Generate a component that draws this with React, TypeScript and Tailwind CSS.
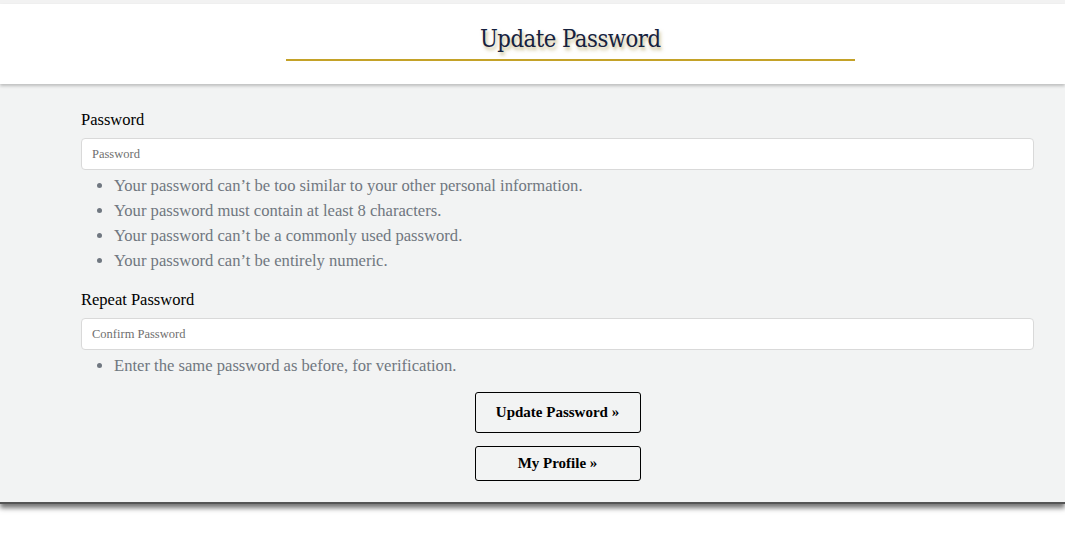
export default function App() {
  const rules = [
    "Your password can\u2019t be too similar to your other personal information.",
    "Your password must contain at least 8 characters.",
    "Your password can\u2019t be a commonly used password.",
    "Your password can\u2019t be entirely numeric.",
  ];

  return (
    <div className="min-h-[542px] bg-white font-['Liberation_Serif','Times_New_Roman',serif] text-black">
      <div className="h-[4px] bg-[#f2f2f2]" />

      {/* header */}
      <header className="relative z-10 h-[80px] bg-white shadow-[0_2px_3px_rgba(0,0,0,0.22)]">
        <div className="ml-[286px] w-[569px] pt-[20px]">
          <h1 className="text-center text-[25px] leading-[30px] text-[#16223f] [text-shadow:2px_3px_4px_rgba(150,130,40,0.55)] font-['DejaVu_Serif','Liberation_Serif',serif] tracking-[-0.6px]">
            <span className="inline-block scale-x-[0.85]">Update Password</span>
          </h1>
          <div className="mt-[5px] h-[2px] bg-[#c4a228]" />
        </div>
      </header>

      {/* form panel */}
      <main className="h-[420px] bg-[#f2f3f3] pl-[81px] pr-[31px] pt-[26px] shadow-[0_4px_5px_rgba(0,0,0,0.55)] border-b-[2px] border-[#555]">
        <label className="block text-[16.5px] leading-[20px]">Password</label>
        <input
          type="password"
          placeholder="Password"
          className="mt-[8px] block h-[32px] w-full rounded-[4px] border border-[#d9d9d9] bg-white px-[10px] text-[12.5px] placeholder:text-[#6f6f6f] outline-none"
        />
        <ul className="mt-[3px] list-disc pl-[33px] text-[16.6px] leading-[25px] text-[#707780]">
          {rules.map((r) => (
            <li key={r}>{r}</li>
          ))}
        </ul>

        <label className="mt-[17px] block text-[16.5px] leading-[20px]">Repeat Password</label>
        <input
          type="password"
          placeholder="Confirm Password"
          className="mt-[8px] block h-[32px] w-full rounded-[4px] border border-[#d9d9d9] bg-white px-[10px] text-[12.5px] placeholder:text-[#6f6f6f] outline-none"
        />
        <ul className="mt-[3px] list-disc pl-[33px] text-[16.6px] leading-[25px] text-[#707780]">
          <li>Enter the same password as before, for verification.</li>
        </ul>

        <div className="mt-[14px] flex flex-col items-center gap-[13px]">
          <button className="h-[41px] w-[166px] rounded-[3px] border border-black bg-transparent text-[15px] font-bold">
            Update Password »
          </button>
          <button className="h-[35px] w-[166px] rounded-[3px] border border-black bg-transparent text-[15px] font-bold">
            My Profile »
          </button>
        </div>
      </main>
    </div>
  );
}
